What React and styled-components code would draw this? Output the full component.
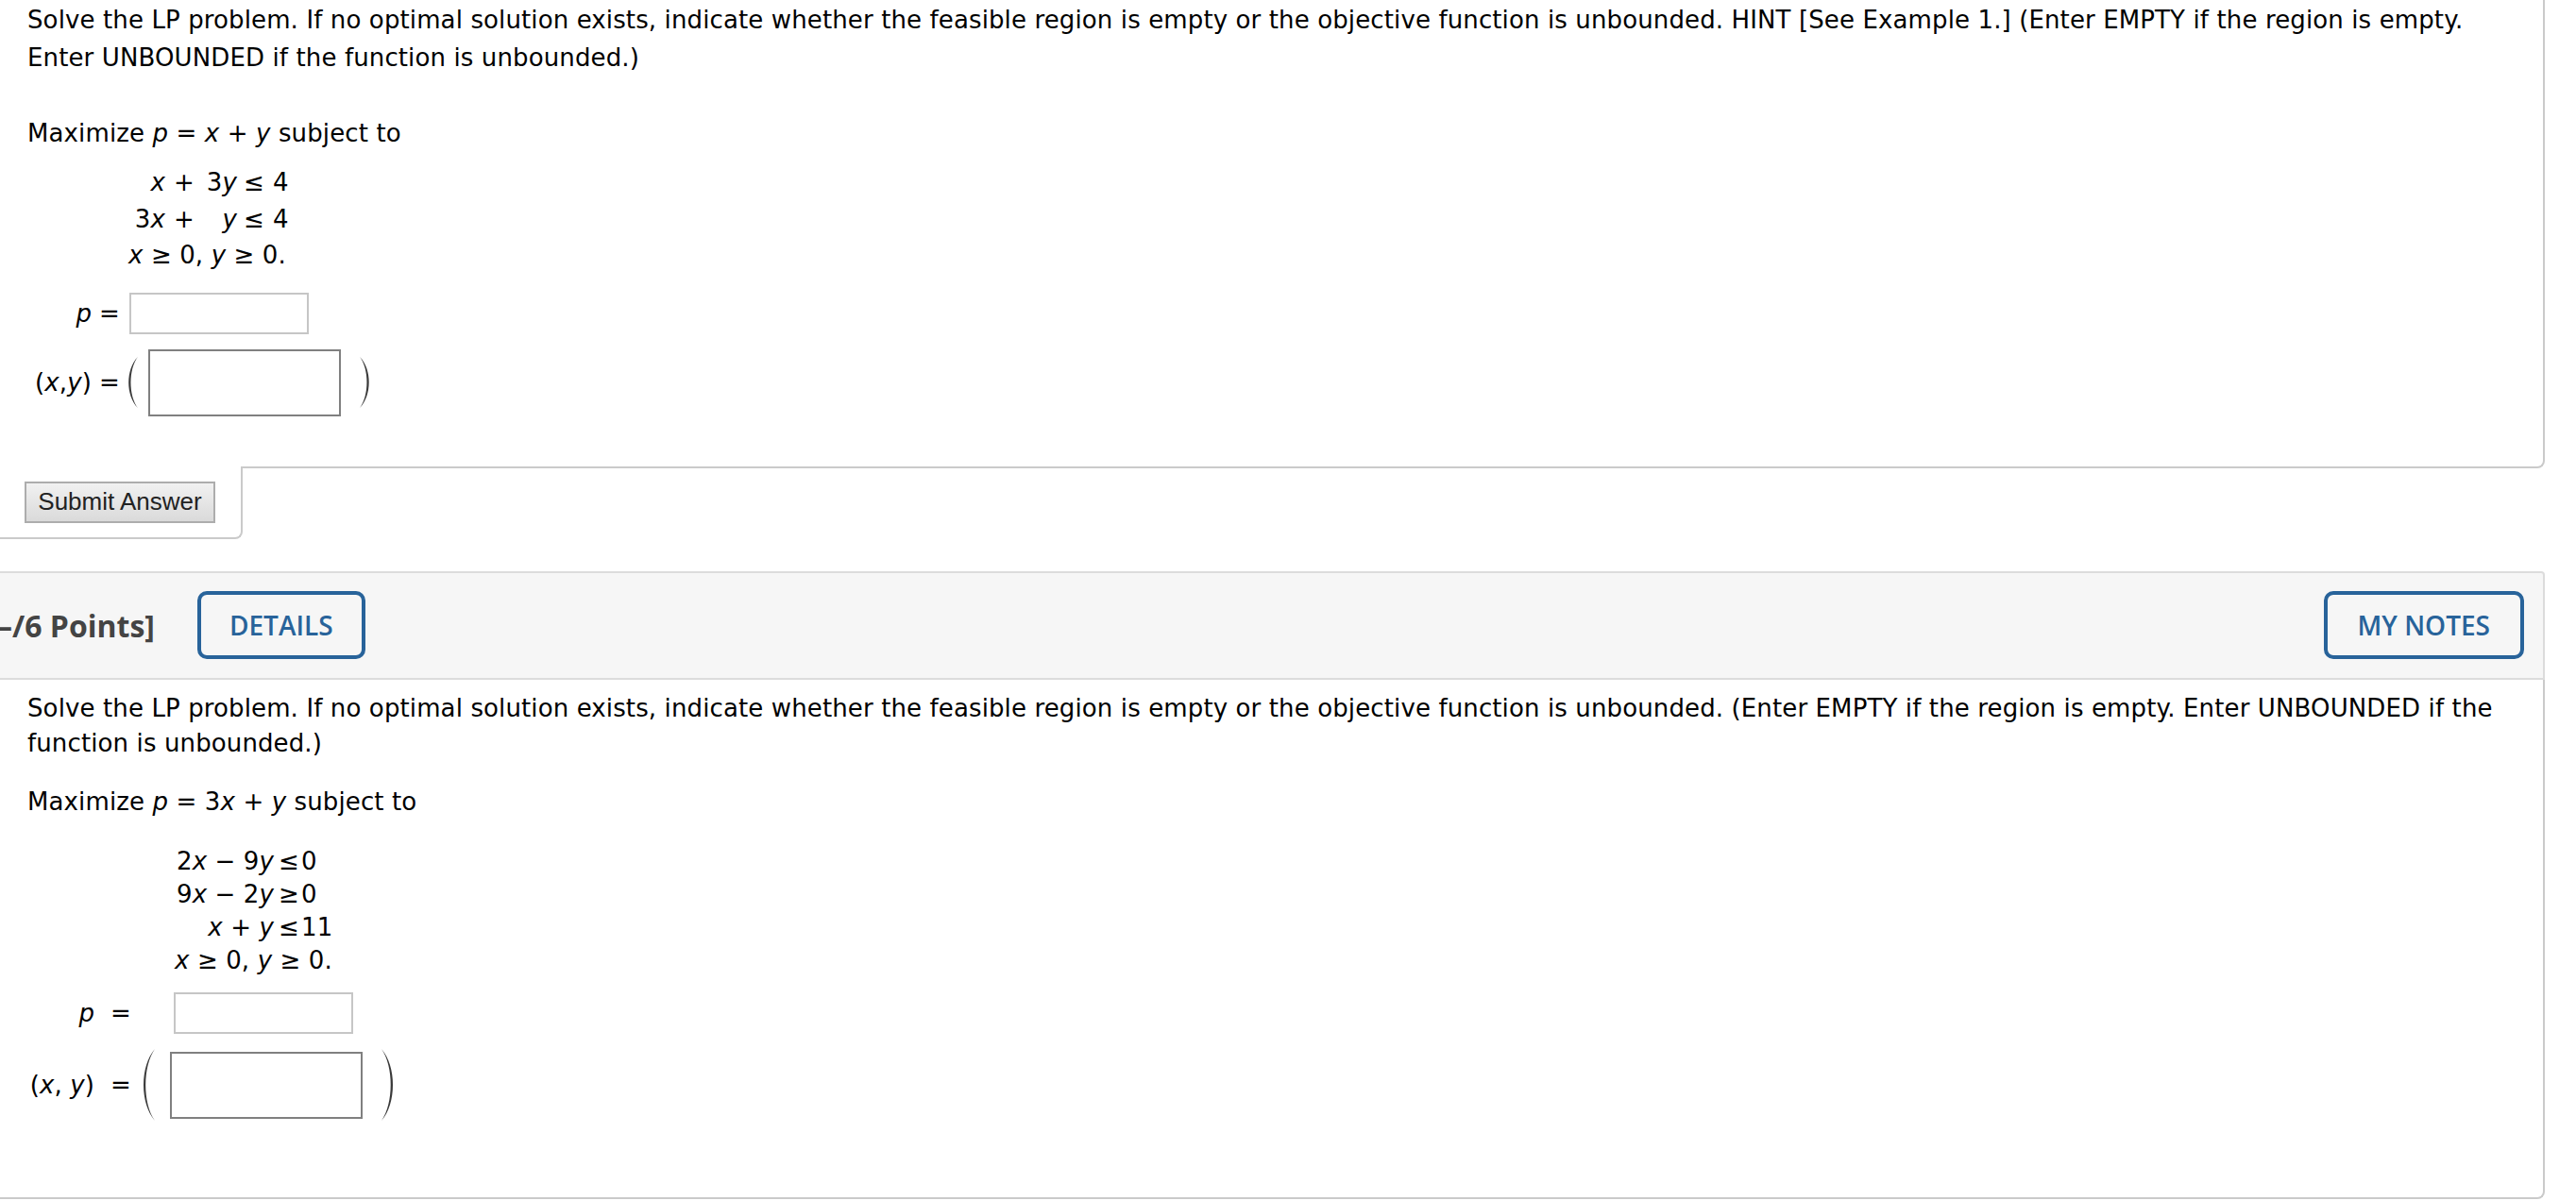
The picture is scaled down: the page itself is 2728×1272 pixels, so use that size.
import React from "react";
import styled, { createGlobalStyle } from "styled-components";

const GlobalStyle = createGlobalStyle`
  html, body {
    margin: 0;
    padding: 0;
    background: #fff;
    overflow: hidden;
  }
  body {
    font-family: Verdana, "DejaVu Sans", sans-serif;
    color: #000;
  }
`;

const Page = styled.div`
  width: 2695px;
`;

// question text area, open on the left (page is scrolled sideways)
const QuestionBody = styled.div`
  box-sizing: border-box;
  border-right: 2px solid #cacaca;
  border-bottom: 2px solid #cacaca;
  border-bottom-right-radius: 8px;
  padding: ${(p) => p.$pad};
  font-size: 26px;
  letter-spacing: 0.12px;
  background: #fff;
`;

const Prompt = styled.p`
  margin: 0 0 ${(p) => p.$mb}px 0;
  line-height: ${(p) => p.$lh}px;
`;

const Var = styled.span`
  font-style: italic;
`;

const Constraints = styled.div`
  display: grid;
  grid-template-columns: ${(p) => p.$cols};
  width: max-content;
  margin: 0 0 0 ${(p) => p.$ml}px;
  line-height: ${(p) => p.$lh}px;
  white-space: nowrap;
`;

const Cell = styled.span`
  text-align: ${(p) => p.$align || "left"};
  padding-left: ${(p) => p.$pl || 0}px;
`;

const SpanRow = styled.span`
  grid-column: 1 / -1;
`;

const AnswerRow = styled.div`
  display: flex;
  align-items: center;
  height: ${(p) => p.$h}px;
  margin-top: ${(p) => p.$mt}px;
  white-space: nowrap;
`;

const Label = styled.span`
  width: ${(p) => p.$w}px;
  text-align: right;
  flex-shrink: 0;
`;

const Eq = styled.span`
  box-sizing: border-box;
  width: ${(p) => p.$w}px;
  padding-left: ${(p) => p.$pl}px;
  flex-shrink: 0;
`;

const AnswerInput = styled.input`
  box-sizing: border-box;
  width: ${(p) => p.$w}px;
  height: ${(p) => p.$h}px;
  margin-left: ${(p) => p.$ml || 0}px;
  border: 2px solid ${(p) => (p.$dark ? "#808080" : "#c6c6c6")};
  border-radius: 0;
  background: #fff;
  padding: 0 6px;
  font-size: 26px;
  font-family: Verdana, "DejaVu Sans", sans-serif;
  outline: none;
`;

const ParenBox = styled.svg`
  display: block;
  flex-shrink: 0;
  margin-left: ${(p) => p.$ml || 0}px;
`;

const Paren = ({ side, w, h, ml }) => {
  const d =
    side === "left"
      ? `M ${w - 1} 1 C 0 ${h * 0.25}, 0 ${h * 0.75}, ${w - 1} ${h - 1} C 3 ${h * 0.75}, 3 ${h * 0.25}, ${w - 1} 1 Z`
      : `M 1 1 C ${w} ${h * 0.25}, ${w} ${h * 0.75}, 1 ${h - 1} C ${w - 3} ${h * 0.75}, ${w - 3} ${h * 0.25}, 1 1 Z`;
  return (
    <ParenBox $ml={ml} width={w} height={h} viewBox={`0 0 ${w} ${h}`}>
      <path d={d} fill="#3a3a3a" />
    </ParenBox>
  );
};

// submit area hangs below the first question
const SubmitTab = styled.div`
  box-sizing: border-box;
  width: 257px;
  margin-top: -2px;
  padding: 16px 0 15px 26px;
  background: #fff;
  border-right: 2px solid #cacaca;
  border-bottom: 2px solid #cacaca;
  border-bottom-right-radius: 8px;
`;

const SubmitButton = styled.button`
  box-sizing: border-box;
  width: 202px;
  height: 44px;
  padding: 0;
  font-family: "Liberation Sans", Arial, sans-serif;
  font-size: 26px;
  color: #222;
  background: linear-gradient(#f1f1f1, #dadada);
  border: 2px solid #adadad;
  border-radius: 0;
`;

const Header = styled.div`
  box-sizing: border-box;
  display: flex;
  align-items: center;
  height: 115px;
  margin-top: 34px;
  padding-right: 20px;
  background: #f6f6f6;
  border-top: 2px solid #dcdcdc;
  border-bottom: 2px solid #dcdcdc;
  border-right: 2px solid #dcdcdc;
  border-top-right-radius: 4px;
`;

const Points = styled.span`
  margin-left: -3px;
  font-family: "Open Sans", sans-serif;
  font-weight: 700;
  font-size: 32px;
  color: #444;
  white-space: nowrap;
`;

const OutlineButton = styled.button`
  box-sizing: border-box;
  height: 72px;
  padding: 0 ${(p) => p.$px}px;
  margin-left: ${(p) => p.$ml};
  font-family: "Open Sans", sans-serif;
  font-weight: 600;
  font-size: 28px;
  color: #28639a;
  background: transparent;
  border: 4px solid #28639a;
  border-radius: 10px;
`;

export default function App() {
  return (
    <Page>
      <GlobalStyle />
      <QuestionBody $pad="1px 20px 53px 29px">
        <Prompt $lh={40} $mb={40}>
          Solve the LP problem. If no optimal solution exists, indicate whether the feasible
          region is empty or the objective function is unbounded. HINT [See Example 1.] (Enter
          EMPTY if the region is empty.
          <br />
          Enter UNBOUNDED if the function is unbounded.)
        </Prompt>
        <Prompt $lh={40} $mb={13}>
          Maximize <Var>p</Var> = <Var>x</Var> + <Var>y</Var> subject to
        </Prompt>
        <Constraints $cols="39px 40px 36px 33px auto" $ml={107} $lh={38.5}>
          <Cell $align="right"><Var>x</Var></Cell>
          <Cell $align="center">+</Cell>
          <Cell $align="right">3<Var>y</Var></Cell>
          <Cell $pl={7}>≤</Cell>
          <Cell $pl={5}>4</Cell>
          <Cell $align="right">3<Var>x</Var></Cell>
          <Cell $align="center">+</Cell>
          <Cell $align="right"><Var>y</Var></Cell>
          <Cell $pl={7}>≤</Cell>
          <Cell $pl={5}>4</Cell>
          <SpanRow>
            <Var>x</Var> ≥ 0, <Var>y</Var> ≥ 0.
          </SpanRow>
        </Constraints>
        <AnswerRow $h={44} $mt={20}>
          <Label $w={68}><Var>p</Var></Label>
          <Eq $w={36} $pl={8}>=</Eq>
          <AnswerInput type="text" $w={190} $h={44} $ml={4} />
        </AnswerRow>
        <AnswerRow $h={71} $mt={16}>
          <Label $w={68}>(<Var>x</Var>,<Var>y</Var>)</Label>
          <Eq $w={36} $pl={8}>=</Eq>
          <Paren side="left" w={14} h={56} />
          <AnswerInput type="text" $w={204} $h={71} $ml={10} $dark />
          <Paren side="right" w={14} h={56} ml={19} />
        </AnswerRow>
      </QuestionBody>
      <SubmitTab>
        <SubmitButton>Submit Answer</SubmitButton>
      </SubmitTab>

      <Header>
        <Points>–/6 Points]</Points>
        <OutlineButton $ml="45px" $px={30}>DETAILS</OutlineButton>
        <OutlineButton $ml="auto" $px={32}>MY NOTES</OutlineButton>
      </Header>
      <QuestionBody $pad="12px 20px 80px 29px">
        <Prompt $lh={37} $mb={25}>
          Solve the LP problem. If no optimal solution exists, indicate whether the feasible
          region is empty or the objective function is unbounded. (Enter EMPTY if the region is
          empty. Enter UNBOUNDED if the
          <br />
          function is unbounded.)
        </Prompt>
        <Prompt $lh={37} $mb={27}>
          Maximize <Var>p</Var> = 3<Var>x</Var> + <Var>y</Var> subject to
        </Prompt>
        <Constraints $cols="105px 29px auto" $ml={156} $lh={35}>
          <Cell $align="right">2<Var>x</Var> − 9<Var>y</Var></Cell>
          <Cell $pl={5}>≤</Cell>
          <Cell $pl={0}>0</Cell>
          <Cell $align="right">9<Var>x</Var> − 2<Var>y</Var></Cell>
          <Cell $pl={5}>≥</Cell>
          <Cell $pl={0}>0</Cell>
          <Cell $align="right"><Var>x</Var> + <Var>y</Var></Cell>
          <Cell $pl={5}>≤</Cell>
          <Cell $pl={0}>11</Cell>
          <SpanRow>
            <Var>x</Var> ≥ 0, <Var>y</Var> ≥ 0.
          </SpanRow>
        </Constraints>
        <AnswerRow $h={44} $mt={16.5}>
          <Label $w={71}><Var>p</Var></Label>
          <Eq $w={55} $pl={17}>=</Eq>
          <AnswerInput type="text" $w={190} $h={44} $ml={29} />
        </AnswerRow>
        <AnswerRow $h={78} $mt={15}>
          <Label $w={71}>(<Var>x</Var>, <Var>y</Var>)</Label>
          <Eq $w={48} $pl={17}>=</Eq>
          <Paren side="left" w={17} h={78} />
          <AnswerInput type="text" $w={204} $h={71} $ml={15} $dark />
          <Paren side="right" w={17} h={78} ml={19} />
        </AnswerRow>
      </QuestionBody>
    </Page>
  );
}
